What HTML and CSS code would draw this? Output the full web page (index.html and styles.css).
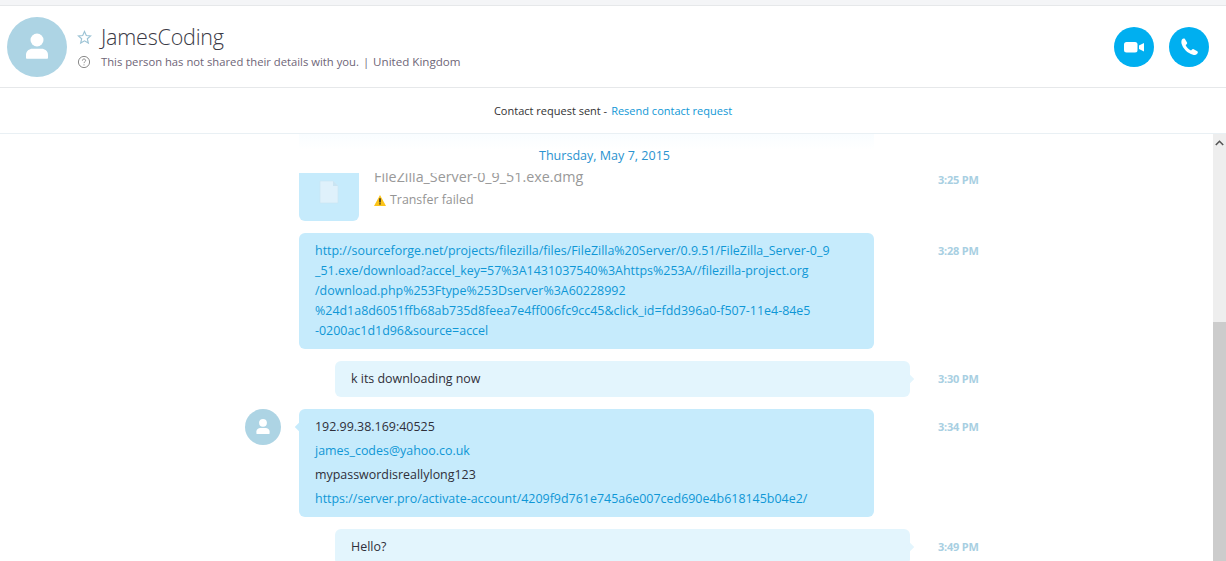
FILE: index.html
```html
<!DOCTYPE html>
<html lang="en">
<head>
<meta charset="utf-8">
<title>JamesCoding</title>
<link rel="stylesheet" href="styles.css">
</head>
<body>
<div class="app">
  <header class="profile">
    <div class="avatar-large">
      <svg viewBox="0 0 36 36" class="person"><circle cx="18" cy="13.800" r="3.900"/><path d="M11.400 24.600v-2c0-2.300 2-3.600 3.800-3.600h5.600c1.800 0 3.800 1.300 3.800 3.600v2c0 .3-.2.500-.5.500H11.900c-.3 0-.5-.2-.5-.5z"/></svg>
    </div>
    <div class="profile-info">
      <div class="name-row">
        <svg class="star" viewBox="0 0 16 16"><path d="M8 1.600l1.900 4.300 4.600.4-3.500 3 1.100 4.600L8 11.500l-4.100 2.400L5 9.300l-3.500-3 4.600-.4z"/></svg>
        <h1 class="name">JamesCoding</h1>
      </div>
      <div class="status-row">
        <svg class="help" viewBox="0 0 14 14"><circle cx="7" cy="7" r="5.600"/><path d="M5.400 5.600c0-1 .7-1.600 1.600-1.600s1.600.6 1.600 1.500c0 1.300-1.600 1.300-1.600 2.600"/><path d="M7 9.400v1"/></svg>
        <span class="status">This person has not shared their details with you.</span>
        <span class="separator">|</span>
        <span class="location">United Kingdom</span>
      </div>
    </div>
    <div class="actions">
      <button class="round-btn" aria-label="Video call">
        <svg viewBox="0 0 24 24" width="24" height="24"><rect x="2" y="7" width="13.500" height="10.500" rx="2.500"/><path d="M17 10.600l5-2.600v8.500l-5-2.600z"/></svg>
      </button>
      <button class="round-btn" aria-label="Call">
        <svg viewBox="0 0 24 24" width="24" height="24"><path d="M5 4.500C5.600 3.400 7 3 7.800 3.800L10 7.500c.4.700 0 1.400-.6 1.900l-.8.600c1 2.400 3 4.500 5.400 5.600l.8-.9c.5-.6 1.200-.8 1.900-.4l3.600 2c.7.500.7 1.500.1 2.200-1 1.300-2.600 1.800-4.400 1.300C10.500 18.500 5.800 13.500 4.500 8.600 4.200 7 4.400 5.500 5 4.500z"/></svg>
      </button>
    </div>
  </header>

  <div class="request-bar">Contact request sent - <a class="link">Resend contact request</a></div>

  <main class="chat">
    <div class="conversation">
      <div class="date-band">Thursday, May 7, 2015</div>
      <div class="messages">
        <div class="msg">
          <div class="bubble incoming file">
            <div class="file-thumb">
              <svg viewBox="0 0 20 24" width="20" height="24"><path class="sheet" d="M1 1h13l5 5v17H1z"/><path class="fold" d="M14 1l5 5h-5z"/></svg>
            </div>
            <div class="file-info">
              <div class="file-name">FileZilla_Server-0_9_51.exe.dmg</div>
              <div class="file-status">
                <svg viewBox="0 0 12 11" width="12" height="11"><path class="warn" d="M6 0l6 11H0z"/><path class="mark" d="M5.300 3.200h1.400v4.200H5.300zM5.300 8.200h1.400v1.400H5.300z"/></svg>
                <span>Transfer failed</span>
              </div>
            </div>
          </div>
          <time class="time time-file">3:25 PM</time>
        </div>

        <div class="msg">
          <div class="bubble incoming url-block">
            <a class="link">http://sourceforge.net/projects/filezilla/files/FileZilla%20Server/0.9.51/FileZilla_Server-0_9<br>_51.exe/download?accel_key=57%3A1431037540%3Ahttps%253A//filezilla-project.org<br>/download.php%253Ftype%253Dserver%3A60228992<br>%24d1a8d6051ffb68ab735d8feea7e4ff006fc9cc45&amp;click_id=fdd396a0-f507-11e4-84e5<br>-0200ac1d1d96&amp;source=accel</a>
          </div>
          <time class="time">3:28 PM</time>
        </div>

        <div class="msg">
          <div class="bubble outgoing nub-right">k its downloading now</div>
          <time class="time">3:30 PM</time>
        </div>

        <div class="msg">
          <div class="avatar-small">
            <svg viewBox="0 0 36 36" class="person"><circle cx="18" cy="13.800" r="3.900"/><path d="M11.400 24.600v-2c0-2.300 2-3.600 3.800-3.600h5.600c1.800 0 3.800 1.300 3.800 3.600v2c0 .3-.2.500-.5.500H11.900c-.3 0-.5-.2-.5-.5z"/></svg>
          </div>
          <div class="bubble incoming nub-left stack">
            <p>192.99.38.169:40525</p>
            <p><a class="link">james_codes@yahoo.co.uk</a></p>
            <p>mypasswordisreallylong123</p>
            <p><a class="link">https://server.pro/activate-account/4209f9d761e745a6e007ced690e4b618145b04e2/</a></p>
          </div>
          <time class="time">3:34 PM</time>
        </div>

        <div class="msg">
          <div class="bubble outgoing nub-right">Hello?</div>
          <time class="time">3:49 PM</time>
        </div>
      </div>
    </div>
    <div class="scrollbar">
      <svg class="scroll-arrow" viewBox="0 0 9 6" width="9" height="6"><path d="M.8 5L4.500 1.300 8.200 5"/></svg>
      <div class="scroll-thumb"></div>
    </div>
  </main>
</div>
</body>
</html>
```
FILE: styles.css
```css
* { box-sizing: border-box; }
html, body { margin: 0; height: 100%; overflow: hidden; background: #fff; }
body { font-family: "Open Sans", "Noto Sans", "Liberation Sans", sans-serif; font-size: 12px; color: #2f2f3a; }
.app { height: 561px; display: flex; flex-direction: column; border-top: 5px solid #f4f5f7; }

.profile { height: 83px; flex: none; display: flex; align-items: center; padding: 0 17px 0 7px; border-top: 1px solid #e6e8ea; border-bottom: 1px solid #e6e8ea; }
.avatar-large { width: 60px; height: 60px; border-radius: 50%; background: #add4e4; flex: none; }
.person { display: block; width: 100%; height: 100%; fill: #fff; }
.profile-info { margin-left: 10px; display: flex; flex-direction: column; }
.name-row, .status-row { display: flex; align-items: center; }
.name-row { height: 28px; padding-top: 1px; }
.star { width: 15px; height: 15px; fill: none; stroke: #9cc3d5; stroke-width: 1.200; flex: none; }
.name { margin: 0 0 0 9px; font-size: 21.500px; font-weight: 300; color: #3a3a46; letter-spacing: -.2px; line-height: 28px; }
.status-row { height: 18px; margin-top: 2px; font-size: 11.250px; color: #6e6577; }
.help { width: 14px; height: 14px; fill: none; stroke: #8a8a8a; stroke-width: 1; flex: none; }
.status { margin-left: 10px; }
.separator { margin-left: 4px; }
.location { margin-left: 4px; font-size: 11.600px; }
.actions { margin-left: auto; display: flex; gap: 15px; }
.round-btn { width: 40px; height: 40px; padding: 0; border: 0; border-radius: 50%; background: #00aff0; display: flex; align-items: center; justify-content: center; }
.round-btn svg { fill: #fff; }

.request-bar { height: 46px; flex: none; display: flex; align-items: center; justify-content: center; gap: 4px; font-size: 11px; color: #333; border-bottom: 1px solid #e9f0f4; }
.link { color: #0f97d6; text-decoration: none; }

.chat { flex: 1; min-height: 0; display: flex; }
.conversation { flex: 1; min-width: 0; overflow: hidden; }
.date-band { height: 39px; padding: 13px 4px 0 0; line-height: 18px; text-align: center; font-size: 12.550px; color: #2a93d0; background: linear-gradient(#f9fdff, #fff) no-repeat 299px 0 / 575px 16px; }
.messages { display: flex; flex-direction: column; gap: 12px; padding-left: 245px; }
.msg { display: grid; grid-template-columns: 54px 611px 1fr; align-items: start; }
.bubble { grid-column: 2; width: 575px; border-radius: 6px; font-size: 12.450px; line-height: 24px; padding: 6px 16px; position: relative; color: #2f2f3a; }
.incoming { background: #c6ebfc; }
.outgoing { background: #e3f5fd; justify-self: end; }
.nub-right::after, .nub-left::before { content: ""; position: absolute; width: 6px; height: 6px; transform: rotate(45deg); top: 15px; }
.nub-right::after { right: -3px; background: #e3f5fd; }
.nub-left::before { left: -3px; background: #c6ebfc; }
.url-block { line-height: 20px; padding: 8px 16px; }
.stack p { margin: 0; }
.avatar-small { grid-column: 1; grid-row: 1; width: 36px; height: 36px; border-radius: 50%; background: #add4e4; }
.time { grid-column: 3; padding: 11px 0 0 28px; font-size: 11px; line-height: 14px; font-weight: 700; letter-spacing: -.2px; color: #a8cfe2; }
.time-file { padding-top: 0; }

.file { width: 60px; height: 48px; padding: 0; display: block; overflow: visible; border-radius: 0 0 6px 6px; }
.file-thumb { height: 48px; display: flex; justify-content: center; padding-top: 7px; }
.sheet { fill: #dff1fb; stroke: #c9e4f2; stroke-width: .6; }
.fold { fill: #c9e4f2; }
.file-info { position: absolute; left: 75px; top: 0; height: 48px; width: 400px; overflow: hidden; }
.file-name { font-size: 14.300px; line-height: 20px; margin-top: -6px; white-space: nowrap; color: #999; }
.file-status { margin-top: 3px; display: flex; align-items: center; gap: 4px; font-size: 12.400px; line-height: 20px; color: #949494; }
.warn { fill: #fcc419; }
.mark { fill: #222; }

.scrollbar { width: 13px; flex: none; background: #eee; display: flex; flex-direction: column; }
.scroll-arrow { margin: 6px auto 0; fill: none; stroke: #555; stroke-width: 1.600; flex: none; display: block; }
.scroll-thumb { margin-top: auto; height: 239px; background: #ccc; }
```
